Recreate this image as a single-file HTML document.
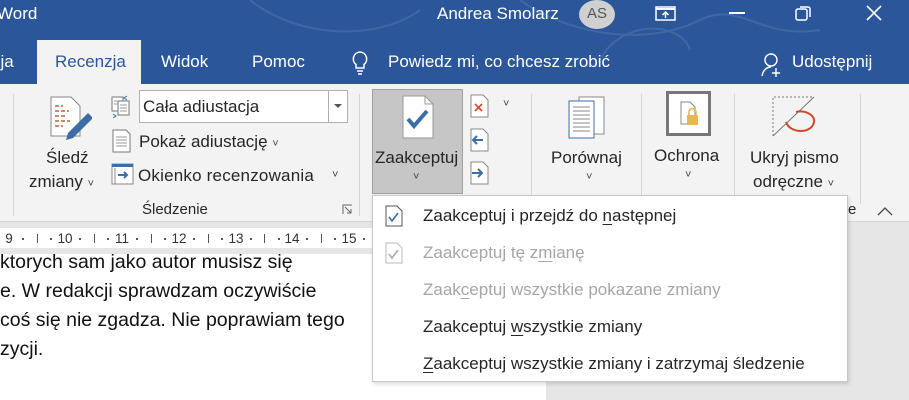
<!DOCTYPE html>
<html><head><meta charset="utf-8"><style>
*{margin:0;padding:0;box-sizing:border-box}
body{width:909px;height:400px;overflow:hidden;position:relative;background:#e6e6e6;font-family:"Liberation Sans",sans-serif;color:#262626}
.a{position:absolute}
.w{color:#fff}
.t{font-size:17px;white-space:nowrap}
.sep{position:absolute;top:94px;width:1px;height:122px;background:#d6d6d6}
.chev{font-size:11px;color:#444}
.mi{position:absolute;left:50px;font-size:17px;white-space:nowrap}
.dis{color:#a6a6a6}
u{text-underline-offset:3px}
.rn{position:absolute;top:231px;font-size:13.5px;color:#333;transform:translateX(-50%)}
.rd{position:absolute;top:238px;width:2px;height:2px;background:#555}
.rt{position:absolute;top:234px;width:1px;height:9px;background:#555}
</style></head><body>
<div class="a" style="left:0;top:0;width:909px;height:84px;background:#2b579a"></div>
<svg class="a" style="left:0;top:0" width="909" height="84" opacity="0.18"><path d="M250 0 C300 40 380 40 420 10 M520 0 C560 30 640 50 700 20 C740 0 760 40 820 30 M600 60 C620 20 680 20 690 50" stroke="#aac" fill="none" stroke-width="2"/></svg>
<div class="a w t" style="left:-3px;top:4px;font-size:17px">Word</div>
<div class="a w t" style="left:437px;top:4px">Andrea Smolarz</div>
<div class="a" style="left:579px;top:0;width:36px;height:29px;border-radius:50%;background:#d0d0d0;color:#555;font-size:15px;text-align:center;line-height:28px">AS</div>
<svg class="a" style="left:655px;top:4px" width="22" height="18"><rect x="1" y="3" width="19" height="13" fill="none" stroke="#fff" stroke-width="1.5"/><line x1="1" y1="5" x2="20" y2="5" stroke="#fff" stroke-width="2"/><path d="M10.5 14V8M7.5 11l3-3 3 3" stroke="#fff" fill="none" stroke-width="1.5"/></svg>
<div class="a" style="left:729px;top:12px;width:16px;height:1.5px;background:#fff"></div>
<svg class="a" style="left:795px;top:4px" width="18" height="18"><rect x="1" y="5" width="11" height="11" rx="2" fill="none" stroke="#fff" stroke-width="1.5"/><path d="M5 3h8a2 2 0 0 1 2 2v8" fill="none" stroke="#fff" stroke-width="1.5"/></svg>
<svg class="a" style="left:866px;top:5px" width="16" height="16"><path d="M1 1L15 15M15 1L1 15" stroke="#fff" stroke-width="1.6"/></svg>
<div class="a w t" style="left:-8px;top:52px">cja</div>
<div class="a" style="left:37px;top:40px;width:104px;height:45px;background:#f3f3f3"></div>
<div class="a t" style="left:55px;top:52px;color:#2b579a">Recenzja</div>
<div class="a w t" style="left:161px;top:52px">Widok</div>
<div class="a w t" style="left:252px;top:52px">Pomoc</div>
<svg class="a" style="left:349px;top:50px" width="22" height="26"><path d="M11 2a7 7 0 0 0-4 12.5V18h8v-3.5A7 7 0 0 0 11 2z" fill="none" stroke="#fff" stroke-width="1.5"/><path d="M8 21h6M9 24h4" stroke="#fff" stroke-width="1.5"/></svg>
<div class="a w t" style="left:388px;top:52px">Powiedz mi, co chcesz zrobić</div>
<svg class="a" style="left:760px;top:52px" width="24" height="26"><circle cx="11" cy="8" r="6" fill="none" stroke="#fff" stroke-width="1.4"/><path d="M2 24c1-6 5-9 9-9" fill="none" stroke="#fff" stroke-width="1.4"/><path d="M16 16v9M12 21h8" stroke="#fff" stroke-width="1.4"/></svg>
<div class="a w t" style="left:792px;top:52px">Udostępnij</div>
<div class="a" style="left:0;top:84px;width:909px;height:138px;background:#f3f3f3;border-bottom:1px solid #d4d4d4"></div>
<div class="sep" style="left:13px"></div>
<div class="sep" style="left:359px"></div>
<div class="sep" style="left:531px"></div>
<div class="sep" style="left:641px"></div>
<div class="sep" style="left:734px"></div>
<div class="sep" style="left:860px;height:110px"></div>
<svg class="a" style="left:50px;top:96px" width="42" height="48"><path d="M1 1h20l9 9v30H1z" fill="#fff" stroke="#888"/><path d="M5 10h8M5 15h14M5 20h10M5 25h15M5 30h8" stroke="#c0603a" stroke-width="1.5" stroke-dasharray="4 2"/><path d="M38 17l-20 20-2 7 7-2 20-20z" fill="#3b6ea5"/></svg>
<div class="a t" style="left:46px;top:148px">Śledź</div>
<div class="a t" style="left:29px;top:172px">zmiany <span class="chev">˅</span></div>
<svg class="a" style="left:110px;top:94px" width="24" height="24"><rect x="2" y="3" width="11" height="14" fill="#fff" stroke="#777"/><rect x="8" y="7" width="11" height="14" fill="#fff" stroke="#777"/><path d="M10 11h7M10 14h7M10 17h7M4 7h4M4 10h4" stroke="#999"/><path d="M17 2l-3 2 3 2M3 20l3 2-3 2" stroke="#3b6ea5" fill="none"/></svg>
<div class="a" style="left:139px;top:90px;width:209px;height:33px;background:#fff;border:1px solid #b0b0b0"></div>
<div class="a" style="left:328px;top:90px;width:1px;height:33px;background:#b0b0b0"></div>
<div class="a" style="left:334px;top:104px;border:4px solid transparent;border-top:4px solid #555"></div>
<div class="a t" style="left:143px;top:97px">Cała adiustacja</div>
<svg class="a" style="left:112px;top:129px" width="20" height="24"><path d="M1 1h13l4 4v18H1z" fill="#fff" stroke="#777"/><path d="M4 8h11M4 11h11M4 14h11M4 17h11" stroke="#999"/></svg>
<div class="a t" style="left:139px;top:132px">Pokaż adiustację <span class="chev">˅</span></div>
<svg class="a" style="left:111px;top:163px" width="23" height="22"><rect x="1" y="1" width="21" height="20" fill="#fff" stroke="#888"/><rect x="1" y="1" width="21" height="3" fill="#3b6ea5"/><path d="M4 5v16" stroke="#888"/><path d="M7 12h9M13 9l3 3-3 3" stroke="#3b6ea5" stroke-width="2" fill="none"/></svg>
<div class="a t" style="left:138px;top:166px;letter-spacing:0.2px">Okienko recenzowania</div>
<div class="a chev" style="left:332px;top:169px">˅</div>
<div class="a t" style="left:142px;top:201px;font-size:15px">Śledzenie</div>
<svg class="a" style="left:342px;top:204px" width="11" height="11"><path d="M1 10V1h9M3 3l6 6M9 5v4H5" stroke="#666" fill="none"/></svg>
<div class="a" style="left:372px;top:89px;width:91px;height:105px;background:#c6c6c6;border:1px solid #a0a0a0"></div>
<svg class="a" style="left:402px;top:95px" width="32" height="44"><path d="M1 1h22l8 8v34H1z" fill="#fff" stroke="#999"/><path d="M23 1v8h8" fill="none" stroke="#999"/><path d="M6 24l6 7 13-15" stroke="#3b6ea5" stroke-width="4" fill="none"/></svg>
<div class="a t" style="left:375px;top:148px">Zaakceptuj</div>
<div class="a chev" style="left:413px;top:171px">˅</div>
<svg class="a" style="left:470px;top:94px" width="20" height="24"><path d="M1 1h12l5 5v17H1z" fill="#fff" stroke="#888"/><path d="M5 10l7 7M12 10l-7 7" stroke="#d04a2a" stroke-width="1.6"/></svg>
<div class="a chev" style="left:503px;top:98px">˅</div>
<svg class="a" style="left:470px;top:128px" width="20" height="24"><path d="M1 1h12l5 5v17H1z" fill="#fff" stroke="#888"/><path d="M13 12H3M7 8l-4 4 4 4" stroke="#3b6ea5" stroke-width="2" fill="none"/></svg>
<svg class="a" style="left:470px;top:161px" width="20" height="24"><path d="M1 1h12l5 5v17H1z" fill="#fff" stroke="#888"/><path d="M2 12h10M8 8l4 4-4 4" stroke="#3b6ea5" stroke-width="2" fill="none"/></svg>
<svg class="a" style="left:568px;top:96px" width="38" height="43"><rect x="11" y="1" width="25" height="37" fill="#fff" stroke="#888"/><rect x="1" y="5" width="25" height="37" fill="#fff" stroke="#3b6ea5"/><path d="M5 11h17M5 15h17M5 19h17M5 23h17M5 27h17M5 31h17M5 35h17" stroke="#888"/></svg>
<div class="a t" style="left:551px;top:148px">Porównaj</div>
<div class="a chev" style="left:586px;top:171px">˅</div>
<div class="a" style="left:666px;top:91px;width:45px;height:45px;border:3px solid #777;background:#fff"></div>
<svg class="a" style="left:680px;top:101px" width="20" height="26"><path d="M1 1h9l5 5v17H1z" fill="#fff" stroke="#888"/><rect x="7" y="14" width="11" height="10" fill="#e8b84a"/><path d="M9 14v-3a3.5 3.5 0 0 1 7 0v3" fill="none" stroke="#e8b84a" stroke-width="1.6"/></svg>
<div class="a t" style="left:654px;top:146px">Ochrona</div>
<div class="a chev" style="left:685px;top:169px">˅</div>
<svg class="a" style="left:772px;top:96px" width="46" height="42"><path d="M1 40V1h41" fill="none" stroke="#777" stroke-dasharray="2 2"/><path d="M1 40L42 1" stroke="#777"/><path d="M14 26c4 12 26 12 28 0c1-8-10-12-18-10" fill="none" stroke="#d04a2a" stroke-width="2"/></svg>
<div class="a t" style="left:750px;top:148px">Ukryj pismo</div>
<div class="a t" style="left:753px;top:172px">odręczne <span class="chev">˅</span></div>
<div class="a" style="left:848px;top:201px;font-size:15px">e</div>
<svg class="a" style="left:877px;top:207px" width="16" height="9"><path d="M1 8l7-7 7 7" stroke="#444" fill="none" stroke-width="1.3"/></svg>
<div class="a" style="left:0;top:228px;width:372px;height:20px;background:#fff"></div>
<div class="a" style="left:0;top:248px;width:372px;height:6px;background:#e6e6e6"></div>
<div class="a" style="left:0;top:254px;width:546px;height:146px;background:#fff;overflow:hidden">
<div style="position:absolute;left:0;top:-6px;font-size:19.5px;line-height:29px;color:#111;white-space:nowrap">ktorych sam jako autor musisz się<br>e. W redakcji sprawdzam oczywiście<br>coś się nie zgadza. Nie poprawiam tego<br>zycji.</div></div>
<div class="rn" style="left:9px">9</div><div class="rd" style="left:22px"></div><div class="rt" style="left:37px"></div><div class="rd" style="left:50px"></div>
<div class="rn" style="left:65px">10</div><div class="rd" style="left:79px"></div><div class="rt" style="left:94px"></div><div class="rd" style="left:107px"></div>
<div class="rn" style="left:122px">11</div><div class="rd" style="left:136px"></div><div class="rt" style="left:151px"></div><div class="rd" style="left:164px"></div>
<div class="rn" style="left:179px">12</div><div class="rd" style="left:193px"></div><div class="rt" style="left:208px"></div><div class="rd" style="left:221px"></div>
<div class="rn" style="left:236px">13</div><div class="rd" style="left:250px"></div><div class="rt" style="left:264px"></div><div class="rd" style="left:278px"></div>
<div class="rn" style="left:292px">14</div><div class="rd" style="left:306px"></div><div class="rt" style="left:321px"></div><div class="rd" style="left:334px"></div>
<div class="rn" style="left:349px">15</div><div class="rd" style="left:363px"></div>
<div class="a" style="left:372px;top:195px;width:476px;height:187px;background:#fff;border:1px solid #c8c8c8;box-shadow:1px 2px 4px rgba(0,0,0,0.15)">
<svg class="a" style="left:12px;top:9px" width="18" height="22"><path d="M1 1h11l5 5v15H1z" fill="#fff" stroke="#555"/><path d="M4 12l3 4 6-8" stroke="#3b6ea5" stroke-width="1.6" fill="none"/></svg>
<div class="mi" style="top:10px">Zaakceptuj i przejdź do <u>n</u>astępnej</div>
<svg class="a" style="left:12px;top:46px" width="18" height="22"><path d="M1 1h11l5 5v15H1z" fill="#fff" stroke="#bbb"/><path d="M4 12l3 4 6-8" stroke="#aaa" stroke-width="1.6" fill="none"/></svg>
<div class="mi dis" style="top:47px">Zaakceptuj tę z<u>m</u>ianę</div>
<div class="mi dis" style="top:84px">Zaak<u>c</u>eptuj wszystkie pokazane zmiany</div>
<div class="mi" style="top:121px">Zaakceptuj <u>w</u>szystkie zmiany</div>
<div class="mi" style="top:158px"><u>Z</u>aakceptuj wszystkie zmiany i zatrzymaj śledzenie</div>
</div>
</body></html>
